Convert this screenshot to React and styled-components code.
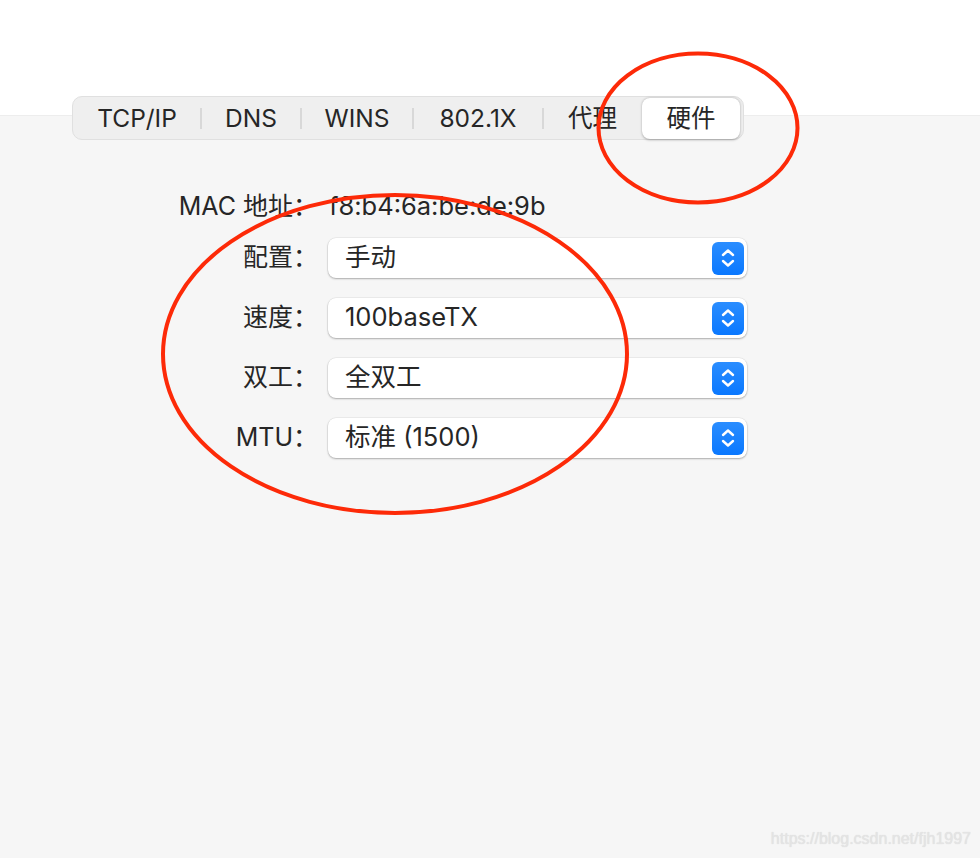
import styled, { createGlobalStyle } from "styled-components";

const GlobalStyle = createGlobalStyle`
  html, body {
    margin: 0;
    padding: 0;
    background: #f6f6f6;
  }
  * {
    box-sizing: border-box;
  }
`;

const tabs = [
  { name: "TCP/IP", w: 128 },
  { name: "DNS", w: 100 },
  { name: "WINS", w: 112 },
  { name: "802.1X", w: 130 },
  { name: "代理", w: 99 },
  { name: "硬件", w: 98, selected: true },
];

const rows = [
  { label: "配置：", value: "手动" },
  { label: "速度：", value: "100baseTX" },
  { label: "双工：", value: "全双工" },
  { label: "MTU：", value: "标准 (1500)" },
];

const Stepper = () => (
  <StepperButton>
    <svg width="18" height="22" viewBox="0 0 18 22" fill="none">
      <path d="M4 8 L9 3.5 L14 8" stroke="#fff" strokeWidth="2.4" strokeLinecap="round" strokeLinejoin="round" />
      <path d="M4 14 L9 18.5 L14 14" stroke="#fff" strokeWidth="2.4" strokeLinecap="round" strokeLinejoin="round" />
    </svg>
  </StepperButton>
);

const App = () => {
  return (
    <Page>
      <GlobalStyle />
      <TopBand />
      <TabBar>
        {tabs.map((t, i) => (
          <TabItem key={t.name} $w={t.w} $selected={t.selected} $sep={i > 0 && !t.selected}>
            {t.name}
          </TabItem>
        ))}
      </TabBar>

      <Form>
        <MacRow>
          <Label>MAC 地址：</Label>
          <MacValue>f8:b4:6a:be:de:9b</MacValue>
        </MacRow>
        {rows.map((r) => (
          <Row key={r.label}>
            <Label>{r.label}</Label>
            <Popup>
              <PopupText>{r.value}</PopupText>
              <Stepper />
            </Popup>
          </Row>
        ))}
      </Form>

      <Marks width="980" height="858" viewBox="0 0 980 858">
        <ellipse cx="698" cy="128" rx="99.5" ry="74.5" fill="none" stroke="#fd2a08" strokeWidth="4" />
        <ellipse cx="395" cy="354" rx="232" ry="159" fill="none" stroke="#fd2a08" strokeWidth="4" />
      </Marks>
      <Watermark>https://blog.csdn.net/fjh1997</Watermark>
    </Page>
  );
};

const Page = styled.div`
  position: relative;
  width: 980px;
  height: 858px;
  overflow: hidden;
  background: #f6f6f6;
  font-family: "Inter", "Noto Sans CJK SC", sans-serif;
  color: #262626;
`;

const TopBand = styled.div`
  height: 116px;
  background: #ffffff;
  border-bottom: 1px solid #ededed;
`;

const TabBar = styled.div`
  display: flex;
  align-items: center;
  width: 672px;
  height: 44px;
  margin: -20px 0 0 72px;
  padding: 0;
  background: #efefef;
  border: 1px solid #e0e0e0;
  border-radius: 10px;
`;

const TabItem = styled.div`
  position: relative;
  display: flex;
  align-items: center;
  justify-content: center;
  flex: 0 0 ${(p) => p.$w}px;
  height: 41px;
  font-size: 24.5px;
  line-height: 1;
  border-radius: 8px;
  background: ${(p) => (p.$selected ? "#ffffff" : "transparent")};
  box-shadow: ${(p) => (p.$selected ? "0 0.5px 2.5px rgba(0,0,0,0.3)" : "none")};

  &::before {
    content: "";
    display: ${(p) => (p.$sep ? "block" : "none")};
    position: absolute;
    left: -1px;
    top: 10px;
    width: 2px;
    height: 21px;
    background: #d8d8d8;
  }
`;

const Form = styled.div`
  display: flex;
  flex-direction: column;
  gap: 20px;
  margin: 47px 0 0 72px;
`;

const Row = styled.div`
  display: flex;
  align-items: center;
  gap: 10px;
  height: 40px;
`;

const MacRow = styled(Row)`
  margin-bottom: -9px;
`;

const Label = styled.div`
  width: 246px;
  font-size: 25px;
  line-height: 1;
  padding-bottom: 2px;
  text-align: right;
  white-space: nowrap;
`;

const MacValue = styled.div`
  font-size: 25.5px;
  line-height: 1;
  padding-left: 1px;
  padding-bottom: 2px;
`;

const Popup = styled.div`
  display: flex;
  align-items: center;
  justify-content: space-between;
  width: 419px;
  height: 40px;
  padding: 0 3px 0 17px;
  background: #ffffff;
  border-radius: 8px;
  box-shadow: 0 0 0 0.5px rgba(0, 0, 0, 0.08), 0 1px 2px rgba(0, 0, 0, 0.28);
  font-size: 25.5px;
`;

const PopupText = styled.span`
  line-height: 1;
  padding-bottom: 2px;
`;

const StepperButton = styled.div`
  display: flex;
  align-items: center;
  justify-content: center;
  width: 32px;
  height: 33px;
  border-radius: 6px;
  background: linear-gradient(#2a8dff, #0a78ff);
`;

const Marks = styled.svg`
  position: absolute;
  left: 0;
  top: 0;
  pointer-events: none;
`;

const Watermark = styled.div`
  position: absolute;
  right: 9px;
  bottom: 10px;
  font-family: "Liberation Sans", Arial, sans-serif;
  font-size: 16px;
  color: #e4e4e4;
  text-shadow: 0 0 1px #d8d8d8;
`;

export default App;
